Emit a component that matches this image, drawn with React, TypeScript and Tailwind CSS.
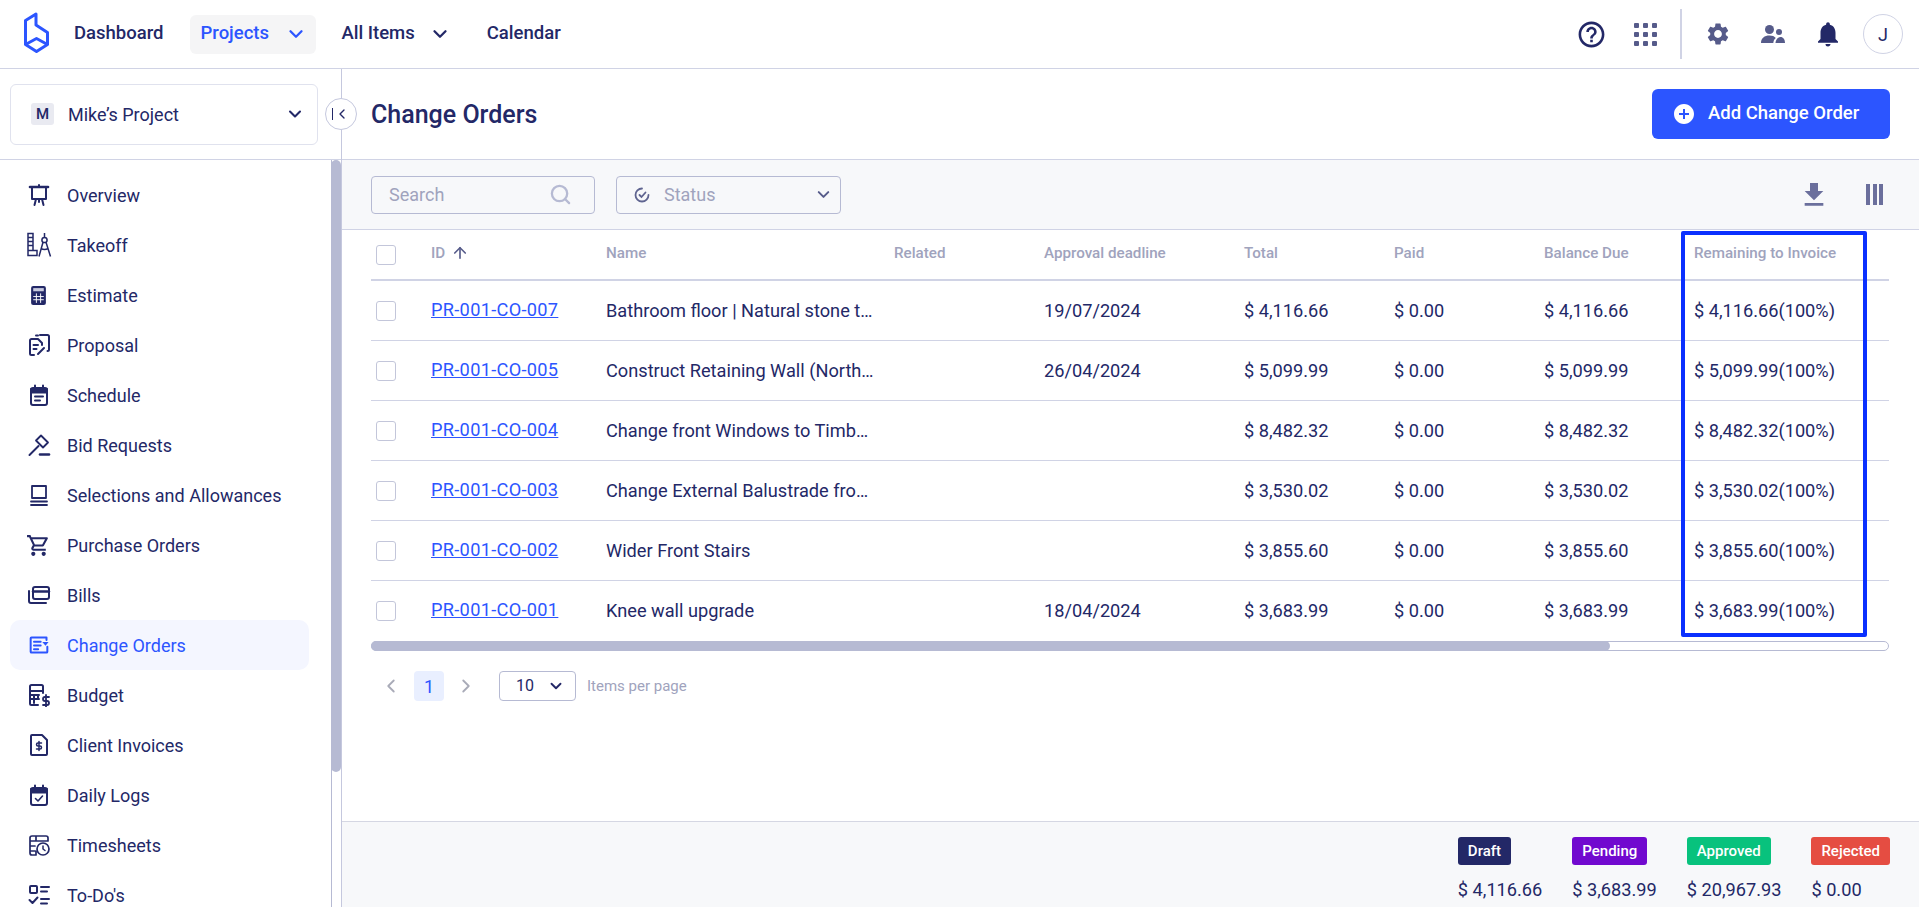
import { ArrowUp, ChevronDown, ChevronLeft, ChevronRight, Search } from "lucide-react";
import { MdAddCircle, MdFileDownload, MdHelpOutline, MdNotifications, MdOutlineShoppingCart, MdSettings } from "react-icons/md";
import type { ReactNode } from "react";

const navy = "text-[#232867]";

function Svg({ children, size = 24, view = 24 }: { children: ReactNode; size?: number; view?: number }) {
  return (
    <svg viewBox={`0 0 ${view} ${view}`} width={size} height={size} fill="none" stroke="currentColor" strokeWidth="2" strokeLinecap="round" strokeLinejoin="round">
      {children}
    </svg>
  );
}

// calendar with a solid top band, shared by Schedule and Daily Logs
function CalendarIcon({ children }: { children: ReactNode }) {
  return (
    <Svg>
      <rect x="4" y="5" width="16" height="17" rx="2" />
      <path d="M4 6h16v3.500H4z" fill="currentColor" />
      <path d="M8 2.500v3M16 2.500v3" />
      {children}
    </Svg>
  );
}

const icons: Record<string, ReactNode> = {
  Overview: (
    <Svg>
      <path d="M3 4h18" strokeWidth="2.600" />
      <path d="M5 4v12h14V4M12 2v2M9 16l-1.500 6M15 16l1.500 6M12 16v3" />
    </Svg>
  ),
  Takeoff: (
    <Svg size={26} view={26}>
      <g strokeWidth="1.500" strokeLinecap="butt" strokeLinejoin="miter">
        <path d="M2 1.500v22h9v-5H7v-17H2zM2 5.500h5M2 9.500h5M2 13.500h5M2 18.500h5" />
        <circle cx="18.500" cy="8" r="2.600" />
        <path d="M18.500 1v4.400M17 10.200l-4 14.300M20 10.200l4.500 14.300M15 16.500c2.400 1.300 4.600 1.300 7 0" />
      </g>
    </Svg>
  ),
  Estimate: (
    <svg viewBox="0 0 14 18" width="15" height="19">
      <rect width="14" height="18" rx="2" fill="currentColor" />
      <rect x="2" y="2" width="10" height="3" fill="#c9cbdf" />
      <path d="M5 7v9M9 7v9M2 10h10M2 13h10" stroke="#fff" strokeWidth="0.900" />
    </svg>
  ),
  Proposal: (
    <Svg>
      <path d="M7 22H4.500A1.500 1.500 0 0 1 3 20.500V7.500A1.500 1.500 0 0 1 4.500 6H11l4 4v2M9 2.500h2M13 2h7.500A1.500 1.500 0 0 1 22 3.500v13A1.500 1.500 0 0 1 20.500 18M6.500 12H11M6.500 16h3M11 21l6-6" />
    </Svg>
  ),
  Schedule: (
    <CalendarIcon>
      <path d="M8 13.500h8M8 17.500h5" />
    </CalendarIcon>
  ),
  "Bid Requests": (
    <Svg>
      <path d="M2.500 22l9-9" />
      <path d="M9 7.500L14 2.500l7 7-5 5z" strokeWidth="1.800" />
      <path d="M13 21.500h9" strokeWidth="2.600" />
    </Svg>
  ),
  "Selections and Allowances": (
    <Svg>
      <path d="M5 3h14v12H5zM4 18.500h16M4 22h16" strokeWidth="1.800" />
    </Svg>
  ),
  "Purchase Orders": <MdOutlineShoppingCart size={25} />,
  Bills: (
    <Svg>
      <rect x="6" y="4" width="16" height="12" rx="2" />
      <path d="M6 8.500h16" strokeWidth="2.400" />
      <path d="M2 8v10a2 2 0 0 0 2 2h15" />
    </Svg>
  ),
  "Change Orders": (
    <Svg size={20}>
      <path d="M22 14v6a1 1 0 0 1-1 1H3a1 1 0 0 1-1-1V4a1 1 0 0 1 1-1h18v3M6 8h8M6 12.500h8M6 17h5" strokeWidth="2.400" />
      <path d="M16 8.500h7.500l-3.700 4.500z" fill="currentColor" stroke="none" />
    </Svg>
  ),
  Budget: (
    <Svg>
      <path d="M11 22H4.500A1.500 1.500 0 0 1 3 20.500v-17A1.500 1.500 0 0 1 4.500 2h10A1.500 1.500 0 0 1 16 3.500V10M3 8h13M7 12v8M11 12v4M3 12h9M3 16h9" />
      <path d="M22 14h-4a1.500 1.500 0 0 0 0 4h2a1.500 1.500 0 0 1 0 4h-4M19 12v12" strokeWidth="1.800" />
    </Svg>
  ),
  "Client Invoices": (
    <Svg>
      <path d="M5 2h10l5 5v14a1 1 0 0 1-1 1H5a1 1 0 0 1-1-1V3a1 1 0 0 1 1-1z" />
      <path d="M14.500 10h-3.500a1.500 1.500 0 0 0 0 3h2a1.500 1.500 0 0 1 0 3H9.500M12 8.500v9" strokeWidth="1.500" />
    </Svg>
  ),
  "Daily Logs": (
    <CalendarIcon>
      <path d="M8.500 15.500l2.500 2.500 4.500-5" strokeWidth="1.600" />
    </CalendarIcon>
  ),
  Timesheets: (
    <Svg>
      <path d="M9 22H5a2 2 0 0 1-2-2V5a2 2 0 0 1 2-2h14a2 2 0 0 1 2 2v3M3 8h18M9 3v4M3 13h5M3 18h5M9 18v4" strokeWidth="1.700" />
      <circle cx="16" cy="16" r="6" strokeWidth="1.700" />
      <path d="M16 13v3l2 1.500" strokeWidth="1.500" />
    </Svg>
  ),
  "To-Do's": (
    <Svg>
      <rect x="3" y="3" width="7" height="7" rx="1" />
      <path d="M14 4h8M14 8.500h6M2.500 17l3 3 5-5.500M14 16h8M14 20.500h6" />
    </Svg>
  ),
};

const menu = Object.keys(icons);

const rows = [
  ["PR-001-CO-007", "Bathroom floor | Natural stone t…", "19/07/2024", "4,116.66"],
  ["PR-001-CO-005", "Construct Retaining Wall (North…", "26/04/2024", "5,099.99"],
  ["PR-001-CO-004", "Change front Windows to Timb…", "", "8,482.32"],
  ["PR-001-CO-003", "Change External Balustrade fro…", "", "3,530.02"],
  ["PR-001-CO-002", "Wider Front Stairs", "", "3,855.60"],
  ["PR-001-CO-001", "Knee wall upgrade", "18/04/2024", "3,683.99"],
];

const totals = [
  ["Draft", "$ 4,116.66", "bg-[#232867]"],
  ["Pending", "$ 3,683.99", "bg-[#7109cf]"],
  ["Approved", "$ 20,967.93", "bg-[#08c27d]"],
  ["Rejected", "$ 0.00", "bg-[#e54d42]"],
];

const tableCols = "grid grid-cols-[60px_175px_288px_150px_200px_150px_150px_150px_1fr] items-center";

function Checkbox() {
  return <span className="ml-[5px] block h-[20px] w-[20px] rounded-[3px] border border-[#c3c6da] bg-white" />;
}

function TopNav() {
  return (
    <header className={`flex h-[69px] shrink-0 items-center border-b border-[#d0d3e5] pl-[24px] pr-[16px] text-[18.500px] font-medium ${navy}`}>
      <svg viewBox="0 0 25 41" className="mb-[3px] h-[41px] w-[25px] text-[#2c55ff]" fill="none" stroke="currentColor" strokeWidth="3" strokeLinejoin="round">
        <path d="M12 2L1.500 8.500V32.500L12.500 39.500 23.500 32.500V20.500L12 13V2zM1.500 32.500L12.500 26.500 23.500 32.500" />
      </svg>
      <span className="ml-[25px]">Dashboard</span>
      <div className="ml-[26px] flex h-[39px] w-[126px] items-center rounded-[6px] bg-[#f5f5f6] pl-[11px] text-[#2c55ff]">
        <span>Projects</span>
        <ChevronDown size={22} strokeWidth={2.5} className="ml-[16px]" />
      </div>
      <span className="ml-[26px]">All Items</span>
      <ChevronDown size={22} strokeWidth={2.5} className="ml-[14px]" />
      <span className="ml-[36px]">Calendar</span>
      <div className="ml-auto flex items-center">
        <MdHelpOutline size={31} />
        <div className="ml-[27px] grid grid-cols-3 gap-[4px]">
          {Array.from({ length: 9 }).map((_, i) => (
            <span key={i} className="h-[5px] w-[5px] rounded-[1px] bg-[#565b8a]" />
          ))}
        </div>
        <div className="ml-[23px] h-[50px] w-[2px] bg-[#d0d3e5]" />
        <MdSettings size={26} className="ml-[23px] text-[#565b8a]" />
        <svg viewBox="0 0 24 18" className="ml-[30px] h-[18px] w-[24px] text-[#565b8a]" fill="currentColor">
          <circle cx="8.500" cy="4.500" r="4.500" />
          <circle cx="18" cy="7" r="3" />
          <path d="M0 18c0-5 3.500-7.500 8.500-7.500 2.800 0 5 .800 6.300 2.500-1.500 1-2.300 2.800-2.500 5zM14.500 18c.200-3 2.500-6 5-6 2.800 0 4.500 2.500 4.500 6z" />
        </svg>
        <MdNotifications size={30} className="ml-[28px]" />
        <div className="ml-[20px] flex h-[40px] w-[40px] items-center justify-center rounded-full border border-[#d0d3e5] text-[18px] font-normal">J</div>
      </div>
    </header>
  );
}

function Sidebar() {
  return (
    <aside className={`relative flex w-[342px] shrink-0 flex-col border-r border-[#c5c8de] ${navy}`}>
      <div className="flex h-[91px] shrink-0 items-center border-b border-[#d0d3e5] pl-[10px]">
        <div className="flex h-[61px] w-[308px] items-center rounded-[6px] border border-[#e0e2ee] pl-[20px] pr-[12px] text-[18px]">
          <span className="flex h-[22px] w-[23px] items-center justify-center rounded-[3px] bg-[#e9eaf1] text-[15px] font-medium">M</span>
          <span className="ml-[14px]">Mike’s Project</span>
          <ChevronDown size={20} strokeWidth={2.5} className="ml-auto" />
        </div>
      </div>
      <div className="flex min-h-0 flex-1">
        <nav className="min-w-0 flex-1 overflow-hidden pl-[10px] pt-[10px]">
          {menu.map((name) => (
            <div
              key={name}
              className={`flex h-[50px] w-[299px] items-center rounded-[10px] text-[18px] ${name === "Change Orders" ? "bg-[#f4f6ff] text-[#2c55ff]" : ""}`}
            >
              <span className="flex w-[57px] shrink-0 justify-center">{icons[name]}</span>
              <span className="pt-[1px]">{name}</span>
            </div>
          ))}
        </nav>
        <div className="w-[10px] shrink-0 border-l border-[#b6bad3]">
          <div className="ml-[-1px] h-[612px] w-[10px] rounded-[5px] bg-[#b6bad3]" />
        </div>
      </div>
      <button className="absolute left-[325px] top-[29px] flex h-[32px] w-[32px] items-center justify-center rounded-full border border-[#c5c8de] bg-white">
        <span className="h-[12px] w-[1.500px] bg-[#232867]" />
        <ChevronLeft size={16} strokeWidth={2} className="ml-[1px]" />
      </button>
    </aside>
  );
}

function Toolbar() {
  return (
    <div className="flex h-[70px] shrink-0 items-center border-b border-[#d0d3e5] bg-[#f7f8fa] pl-[29px] pr-[36px]">
      <div className="flex h-[38px] w-[224px] items-center justify-between rounded-[4px] border border-[#b6bad3] pl-[17px] pr-[22px] text-[18px] text-[#a0a3bd]">
        Search
        <Search size={23} strokeWidth={2.4} className="text-[#b6bad3]" />
      </div>
      <div className="ml-[21px] flex h-[38px] w-[225px] items-center rounded-[4px] border border-[#b6bad3] pl-[17px] pr-[7px] text-[18px] text-[#a0a3bd]">
        <svg viewBox="0 0 16 16" className="h-[16px] w-[16px] text-[#5f6490]" fill="none" stroke="currentColor" strokeWidth="1.800" strokeLinecap="round">
          <path d="M14.500 8A6.500 6.500 0 1 1 8 1.500M5.500 8l2 2 4-4.500" />
        </svg>
        <span className="ml-[14px]">Status</span>
        <ChevronDown size={19} strokeWidth={2.5} className="ml-auto text-[#565b8a]" />
      </div>
      <MdFileDownload size={32} className="ml-auto text-[#6b6f9c]" />
      <div className="ml-[36px] flex gap-[2.500px]">
        <span className="h-[21px] w-[4px] bg-[#6b6f9c]" />
        <span className="h-[21px] w-[4px] bg-[#6b6f9c]" />
        <span className="h-[21px] w-[4px] bg-[#6b6f9c]" />
      </div>
    </div>
  );
}

function OrdersTable() {
  const heads = ["Name", "Related", "Approval deadline", "Total", "Paid", "Balance Due", "Remaining to Invoice"];
  return (
    <div className={`relative ml-[29px] mr-[30px] ${navy}`}>
      <div className={`${tableCols} h-[51px] border-b-2 border-[#d0d3e5] text-[15.200px] font-medium text-[#a0a3bd]`}>
        <Checkbox />
        <span className="mb-[2px] flex items-center gap-[6px]">
          ID <ArrowUp size={18} strokeWidth={2.200} className="text-[#565b8a]" />
        </span>
        {heads.map((h) => (
          <span key={h} className="mb-[2px]">
            {h}
          </span>
        ))}
      </div>
      {rows.map(([id, name, date, amount], i) => (
        <div key={id} className={`${tableCols} h-[60px] text-[18.200px] ${i < rows.length - 1 ? "border-b border-[#d0d3e5]" : ""}`}>
          <Checkbox />
          <a className="mb-[2px] w-fit tracking-[0.3px] text-[#2c55ff] underline">{id}</a>
          <span>{name}</span>
          <span />
          <span>{date}</span>
          <span>$ {amount}</span>
          <span>$ 0.00</span>
          <span>$ {amount}</span>
          <span>$ {amount}(100%)</span>
        </div>
      ))}
      <div className="h-[10px] rounded-[5px] border border-[#b6bad3]">
        <div className="ml-[-1px] mt-[-1px] h-[10px] w-[1239px] rounded-[5px] bg-[#b6bad3]" />
      </div>
      {/* annotation box drawn over the last column */}
      <div className="pointer-events-none absolute left-[1310px] top-[1px] h-[406px] w-[186px] rounded-[2px] border-[4px] border-[#0a30ff]" />
    </div>
  );
}

function Pager() {
  return (
    <div className="ml-[29px] mt-[20px] flex items-center">
      <ChevronLeft size={22} strokeWidth={2} className="ml-[9px] text-[#a9abb8]" />
      <span className="ml-[12px] flex h-[30px] w-[30px] items-center justify-center rounded-[4px] bg-[#e9efff] text-[18px] text-[#2c55ff]">1</span>
      <ChevronRight size={22} strokeWidth={2} className="ml-[11px] text-[#a9abb8]" />
      <div className={`ml-[22px] flex h-[30px] w-[77px] items-center rounded-[4px] border border-[#b6bad3] pl-[16px] text-[16px] ${navy}`}>
        10
        <ChevronDown size={18} strokeWidth={2.500} className="ml-[13px]" />
      </div>
      <span className="ml-[11px] text-[15px] text-[#a0a3bd]">Items per page</span>
    </div>
  );
}

export default function App() {
  return (
    <div className="flex h-screen flex-col overflow-hidden bg-white font-['Roboto',sans-serif]">
      <TopNav />
      <div className="flex min-h-0 flex-1">
        <Sidebar />
        <main className="flex min-w-0 flex-1 flex-col">
          <div className="flex h-[91px] shrink-0 items-center justify-between border-b border-[#d0d3e5] pl-[29px] pr-[29px]">
            <h1 className={`mt-[1px] text-[25px] font-medium ${navy}`}>Change Orders</h1>
            <button className="flex h-[50px] w-[238px] items-center rounded-[6px] bg-[#2c55ff] pl-[20px] text-[18.500px] font-medium text-white">
              <MdAddCircle size={24} />
              <span className="ml-[12px]">Add Change Order</span>
            </button>
          </div>
          <Toolbar />
          <OrdersTable />
          <Pager />
          <div className="mt-auto flex h-[86px] shrink-0 justify-end gap-[30px] border-t border-[#d5d7e3] bg-[#f7f8fa] pr-[29px] pt-[15px]">
            {totals.map(([label, value, bg]) => (
              <div key={label} className="flex flex-col items-start">
                <span className={`flex h-[28px] items-center rounded-[3px] px-[10px] text-[15px] font-medium text-white ${bg}`}>{label}</span>
                <span className={`mt-[11px] text-[18.200px] ${navy}`}>{value}</span>
              </div>
            ))}
          </div>
        </main>
      </div>
    </div>
  );
}
